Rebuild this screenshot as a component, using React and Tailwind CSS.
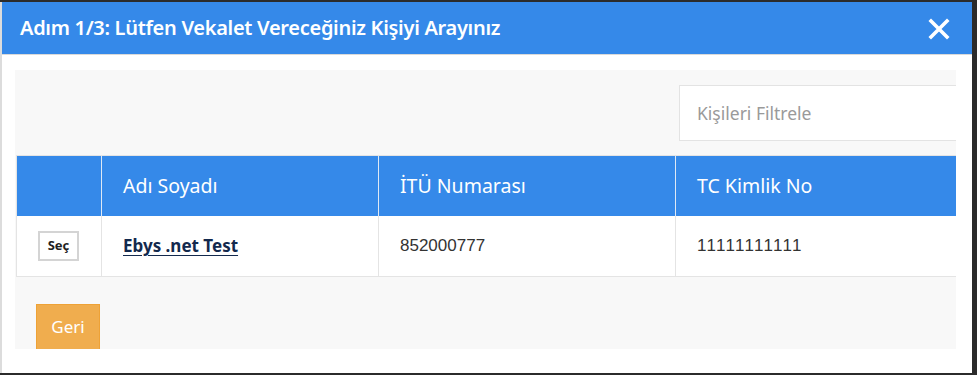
import React from "react";

export default function App() {
  return (
    <div className="w-[977px] h-[375px] bg-[#2b2b2b] overflow-hidden pt-[2px]">
      <div className="w-[972px] h-[371px] bg-white border-l-2 border-[#dcdcdc] flex flex-col" style={{ fontFamily: '"Noto Sans", sans-serif' }}>
        <div className="h-[53px] shrink-0 bg-[#3589e9] flex items-center justify-between pl-[18px] pr-[22px] border-b border-[#d9d9d9]">
          <div className="text-white text-[20px] font-semibold tracking-[-0.3px]">Adım 1/3: Lütfen Vekalet Vereceğiniz Kişiyi Arayınız</div>
          <svg width="22" height="22" viewBox="0 0 22 22" className="mt-[2px]">
            <path d="M3 3 L19 19 M19 3 L3 19" stroke="white" strokeWidth="3.6" strokeLinecap="square" />
          </svg>
        </div>
        <div className="pt-[15px] pl-[13px] pr-[16px]">
          <div className="h-[279px] bg-[#f8f8f8] overflow-hidden flex flex-col">
            <div className="flex justify-end pt-[15px] h-[70px] shrink-0">
              <div className="w-[277px] h-[56px] shrink-0 bg-white border border-[#e3e3e3] border-r-0 flex items-center pl-[17px] text-[17.5px] text-[#9a9a9a]">
                Kişileri Filtrele
              </div>
            </div>
            <div className="mt-[15px] pl-[1px]">
              <div className="grid grid-cols-[85px_277px_297px_282px] w-[941px] border border-[#e4e4e4]">
                <div className="h-[60px] bg-[#3589e9] border-r border-[#dfe9f5]"></div>
                <div className="h-[60px] bg-[#3589e9] border-r border-[#dfe9f5] flex items-center pl-[21px] text-white text-[19.5px]">Adı Soyadı</div>
                <div className="h-[60px] bg-[#3589e9] border-r border-[#dfe9f5] flex items-center pl-[21px] text-white text-[19.5px]">İTÜ Numarası</div>
                <div className="h-[60px] bg-[#3589e9] flex items-center pl-[21px] text-white text-[19.5px]">TC Kimlik No</div>
                <div className="h-[60px] bg-white border-r border-[#e4e4e4] flex items-center pl-[21px]">
                  <button className="w-[41px] h-[30px] border-2 border-[#d4d4d4] bg-white text-[13px] font-bold text-[#222] flex items-center justify-center">Seç</button>
                </div>
                <div className="h-[60px] bg-white border-r border-[#e4e4e4] flex items-center pl-[21px]">
                  <span className="text-[17px] font-bold text-[#13294d] underline underline-offset-[3px]">Ebys .net Test</span>
                </div>
                <div className="h-[60px] bg-white border-r border-[#e4e4e4] flex items-center pl-[21px] text-[17px] text-[#333]" style={{ fontFamily: '"Liberation Sans", Arial, sans-serif' }}>852000777</div>
                <div className="h-[60px] bg-white flex items-center pl-[21px] text-[17px] text-[#333] tracking-[1.3px]" style={{ fontFamily: '"Liberation Sans", Arial, sans-serif' }}>11111111111</div>
              </div>
            </div>
            <div className="mt-[27px] pl-[21px]">
              <button className="w-[64px] h-[46px] bg-[#f0ad4e] border border-[#eea236] text-white text-[17px] flex items-center justify-center">Geri</button>
            </div>
          </div>
        </div>
      </div>
    </div>
  );
}
